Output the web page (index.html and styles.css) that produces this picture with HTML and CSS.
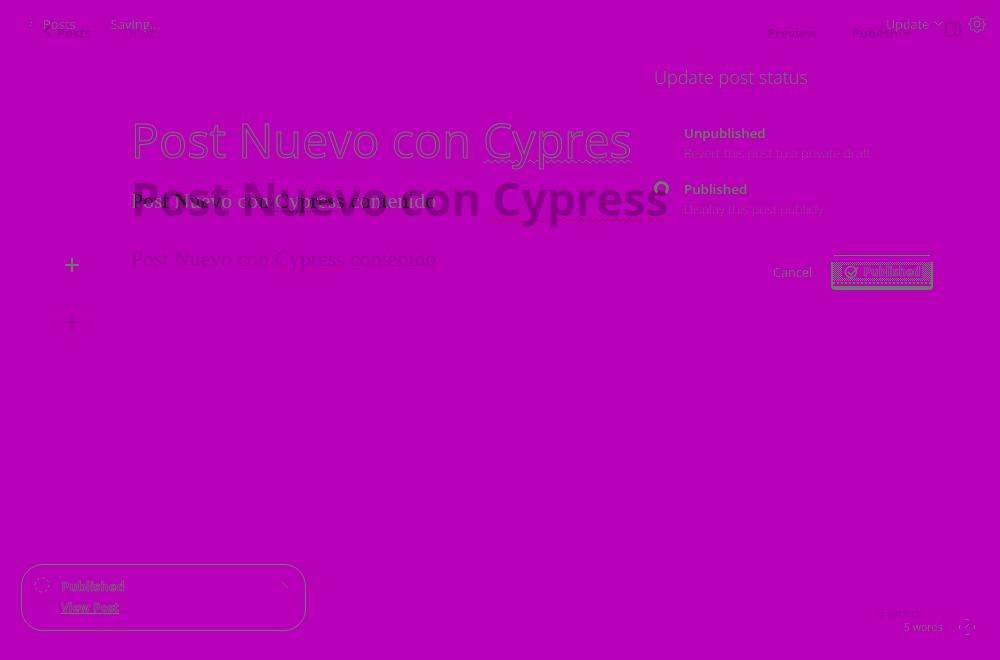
FILE: index.html
```html
<!DOCTYPE html>
<html lang="en">
<head>
<meta charset="utf-8">
<title>Post editor</title>
<link rel="stylesheet" href="styles.css">
</head>
<body>
<div class="stage">
  <section class="edge">
    <header class="e-head">
      <svg class="e-back" width="6" height="8" viewBox="0 0 6 8"><path d="M3 2h1v1H3zM2 5h1v1H2z" fill="#697d69"/></svg>
      <span class="e-posts dash">Posts</span>
      <span class="e-saving dash">Saving...</span>
      <span class="g-spacer"></span>
      <span class="e-update dash">Update</span>
      <svg class="e-chev" width="9" height="6" viewBox="0 0 9 6"><path d="M.5.5l4 4 4-4" fill="none" stroke="#697d69"/></svg>
      <svg class="e-gear" width="18" height="18" viewBox="0 0 18 18"><path d="M7.4 1h3.2l.5 2.2 1.5.7 2-1.1 2.2 2.2-1.1 2 .7 1.5 2.1.5v1l-2.1.5-.7 1.5 1.1 2-2.2 2.2-2-1.1-1.5.7-.5 2.2H7.4l-.5-2.2-1.5-.7-2 1.1-2.2-2.2 1.1-2-.7-1.5L-.5 9.5v-1l2.1-.5.7-1.5-1.1-2 2.2-2.2 2 1.1 1.5-.7z" transform="translate(.9 .9) scale(.9)" fill="none" stroke="#697d69"/><circle cx="9" cy="9" r="3" fill="none" stroke="#697d69"/></svg>
    </header>
    <div class="e-body">
      <div class="e-gutter">
        <svg width="16" height="16" viewBox="0 0 16 16"><path d="M8 1v14M1 8h14" stroke="#697d69" stroke-width="2"/></svg>
      </div>
      <div class="e-doc">
        <h1 class="e-title">Post Nuevo con <span class="e-squig">Cypres</span></h1>
        <p class="e-para">Post Nuevo con <span class="e-dots">Cypress</span> contenido</p>
      </div>
      <aside class="e-menu">
        <h2 class="e-menu-title">Update post status</h2>
        <div class="e-option">
          <span class="e-radio"></span>
          <div>
            <strong class="e-opt-name">Unpublished</strong>
            <p class="e-opt-sub">Revert this post to a private draft.</p>
          </div>
        </div>
        <div class="e-option">
          <span class="e-radio e-radio-on"></span>
          <div>
            <strong class="e-opt-name">Published</strong>
            <p class="e-opt-sub">Display this post publicly.</p>
          </div>
        </div>
        <div class="e-actions">
          <span class="e-cancel dash">Cancel</span>
          <div class="e-btn">
            <span class="e-btn-line"></span>
            <div class="e-btn-face">
              <span class="e-btn-label">
                <svg width="16" height="14" viewBox="0 0 16 14"><circle cx="7" cy="7" r="5.5" fill="none" stroke="#697d69" stroke-width="1.4"/><path d="M4 7l3 3 7-8" fill="none" stroke="#697d69" stroke-width="1.6"/></svg>
                <b>Published</b>
              </span>
            </div>
            <div class="e-btn-base"></div>
          </div>
        </div>
      </aside>
    </div>
    <div class="e-bottom">
      <div class="e-toast">
        <svg class="e-toast-icon" width="16" height="16" viewBox="0 0 16 16"><circle cx="8" cy="8" r="7" fill="none" stroke="#697d69" stroke-dasharray="2.5 3"/></svg>
        <div class="e-toast-text">
          <b>Published</b>
          <a>View Post</a>
        </div>
        <svg class="e-toast-x" width="8" height="8" viewBox="0 0 8 8"><path d="M.5.5l7 7" stroke="#697d69" stroke-dasharray="1.5 1"/></svg>
      </div>
      <div class="e-count">
        <span class="dash">5 words</span>
        <svg width="16" height="16" viewBox="0 0 16 16"><circle cx="8" cy="8" r="7.5" fill="none" stroke="#697d69" stroke-dasharray="4 7.7" stroke-dashoffset="2"/><path d="M6 9l4-4" stroke="#697d69"/></svg>
      </div>
    </div>
  </section>

  <section class="ghost">
    <header class="g-head">
      <span class="g-back"><svg width="9" height="14" viewBox="0 0 9 14"><path d="M7.5 2 2 7l5.5 5" fill="none" stroke="#8f0090" stroke-width="2"/></svg></span>
      <span class="g-posts">Posts</span>
      <span class="g-draft">Draft</span>
      <span class="g-spacer"></span>
      <span class="g-action g-preview">Preview</span>
      <span class="g-action g-publish">Publish</span>
      <svg class="g-chev" width="8" height="5" viewBox="0 0 8 5"><path d="M.5.5 4 4 7.5.5" fill="none" stroke="#8f0090" stroke-width="1.3"/></svg>
      <svg class="g-panel" width="16" height="15" viewBox="0 0 16 15"><rect x="1" y="1" width="14" height="13" rx="1.5" fill="none" stroke="#8f0090" stroke-width="1.5"/><path d="M10 1v13" stroke="#8f0090" stroke-width="1.5"/></svg>
    </header>
    <main class="g-main">
      <div class="g-gutter">
        <span class="g-plus"><svg width="18" height="18" viewBox="0 0 18 18"><path d="M9 1v16M1 9h16" stroke="#9c009c" stroke-width="2"/></svg></span>
      </div>
      <div class="g-doc">
        <h1 class="g-title">Post Nuevo con <span class="g-squig">Cypress</span></h1>
        <p class="g-para">Post Nuevo con <span class="g-squig2">Cypress</span> contenido</p>
      </div>
    </main>
    <footer class="g-foot">
      <span>5 words</span>
      <span class="g-help">?</span>
    </footer>
  </section>
</div>
</body>
</html>
```

FILE: styles.css
```css
html, body {
  margin: 0;
  padding: 0;
  background: #b800b8;
}

.stage {
  position: relative;
  width: 1000px;
  height: 660px;
  overflow: hidden;
  background: #b800b8;
  isolation: isolate;
  font-family: "Open Sans", "Noto Sans", sans-serif;
}

.ghost, .edge {
  position: absolute;
  inset: 0;
  display: flex;
  flex-direction: column;
}

.g-spacer { flex: 1; }

/* small text whose strokes break up into dashes */
.dash {
  color: transparent;
  background: repeating-linear-gradient(90deg, #697d69 0 2px, rgba(105, 125, 105, .35) 2px 3px);
  -webkit-background-clip: text;
  background-clip: text;
}

/* ghost layer */
.g-head {
  display: flex;
  align-items: center;
  height: 20px;
  padding: 23px 39px 0 43px;
  color: #8f0090;
  font-size: 13px;
  font-weight: 600;
}
.g-posts { margin-left: 5px; color: #8f0090; }
.g-draft { margin-left: 33px; color: #a000a2; font-weight: 400; }
.g-preview { margin-right: 35px; }
.g-chev { margin-left: 5px; margin-right: 34px; }
.g-panel { margin-top: -8px; }

.g-main {
  display: flex;
  flex: 1;
  min-height: 0;
}
.g-gutter {
  width: 131px;
  flex: none;
  padding-top: 261px;
}
.g-plus {
  display: flex;
  align-items: center;
  justify-content: center;
  width: 34px;
  height: 34px;
  margin-left: 54px;
  border: 1px solid #a800aa;
  border-radius: 50%;
}
.g-title {
  margin: 125px 0 0;
  font-size: 46px;
  letter-spacing: -.44px;
  line-height: 60px;
  font-weight: 700;
  color: rgb(156, 156, 156);
  mix-blend-mode: color-burn;
  white-space: nowrap;
}
.g-squig {
  text-decoration: underline wavy #c8006a 1px;
  text-underline-offset: 2px;
}
.g-para {
  margin: 15px 0 0;
  font-family: "Liberation Serif", serif;
  font-size: 21.8px;
  line-height: 32px;
  color: #9a009c;
  white-space: nowrap;
}
.g-squig2 {
  text-decoration: underline wavy #e0006c 1.2px;
  text-underline-offset: 1px;
}
.g-foot {
  display: flex;
  align-items: center;
  justify-content: flex-end;
  gap: 17px;
  padding: 0 43px 38px 0;
  font-size: 13px;
  color: #a000a4;
}
.g-help {
  box-sizing: border-box;
  width: 15px;
  height: 15px;
  border: 1.5px solid #a800aa;
  border-radius: 50%;
  text-align: center;
  line-height: 12px;
  font-size: 10px;
}

/* edge layer */
.edge { color: #697d69; }
.e-head {
  display: flex;
  align-items: center;
  height: 18px;
  padding: 15px 14px 0 28px;
  font-size: 13px;
  color: #697d69;
}
.e-posts { margin-left: 9px; }
.e-saving { margin-left: 35px; }
.e-update { font-size: 12.5px; }
.e-chev { margin-left: 5px; margin-right: 25px; }
.e-body {
  display: flex;
  flex: 1;
  min-height: 0;
  position: relative;
}
.e-gutter {
  width: 131px;
  padding: 223px 0 0 64px;
  box-sizing: border-box;
  flex: none;
}
.e-doc { width: 523px; flex: none; }
.e-title {
  margin: 75px 0 0;
  font-size: 46.7px;
  line-height: 64px;
  font-weight: 400;
  color: transparent;
  -webkit-text-stroke: 1px #697d69;
  white-space: nowrap;
}
.e-squig {
  text-decoration: underline wavy #697d69 1px;
  text-underline-offset: 1px;
}
.e-para {
  margin: 13px 0 0;
  font-family: "Liberation Serif", serif;
  font-size: 21.8px;
  line-height: 32px;
  white-space: nowrap;
  color: #697d69;
}
.e-dots {
  text-decoration: underline dotted #222 1px;
  text-underline-offset: 3px;
}
.e-menu {
  display: flex;
  flex-direction: column;
  padding-top: 32px;
  width: 280px;
}
.e-menu-title {
  margin: 0 0 35px;
  font-size: 18px;
  line-height: 24px;
  font-weight: 300;
}
.e-option {
  display: flex;
  gap: 15px;
  margin-bottom: 20px;
  height: 36px;
}
.e-radio {
  box-sizing: border-box;
  width: 15px;
  height: 15px;
  flex: none;
  margin-top: 1px;
  border-radius: 50%;
  visibility: hidden;
}
.e-radio-on {
  position: relative;
  z-index: 2;
  visibility: visible;
  border: 3px solid #697d69;
  border-bottom-color: transparent;
}
.e-opt-name {
  display: block;
  font-size: 13.3px;
  line-height: 18px;
  font-weight: 600;
}
.e-opt-sub {
  margin: 2px 0 0;
  font-size: 12.7px;
  line-height: 18px;
  font-weight: 300;
  white-space: nowrap;
  color: transparent;
  background: repeating-linear-gradient(180deg, #697d69 0 1px, rgba(105, 125, 105, .3) 1px 3px);
  -webkit-background-clip: text;
  background-clip: text;
}
.e-actions {
  display: flex;
  align-items: center;
  justify-content: flex-end;
  gap: 19px;
  padding-right: 1px;
  margin-top: 19px;
}
.e-cancel { font-size: 12.6px; }
.e-btn {
  display: flex;
  flex-direction: column;
  width: 102px;
  height: 35px;
}
.e-btn-line {
  height: 1px;
  margin: 0 3px 6px;
  background: #697d69;
}
.e-btn-face {
  display: flex;
  align-items: center;
  justify-content: center;
  height: 19px;
  border: solid #697d69;
  border-width: 0 2px;
  background: repeating-conic-gradient(#697d69 0 25%, transparent 0 50%) 0 0 / 2px 2px;
}
.e-btn-label {
  display: flex;
  align-items: center;
  gap: 4px;
  height: 13px;
  padding: 0 2px;
  background: #b800b8;
  font-size: 11.5px;
  line-height: 13px;
}
.e-btn-label b {
  font-weight: 700;
  color: transparent;
  -webkit-text-stroke: .6px #697d69;
}
.e-btn-base {
  flex: 1;
  box-sizing: border-box;
  border: solid #697d69;
  border-width: 0 2px 4px;
  border-radius: 0 0 4px 4px;
  background: repeating-linear-gradient(90deg, #697d69 0 2px, transparent 2px 4px) 0 1px / 100% 2px no-repeat;
}
.e-bottom {
  display: flex;
  align-items: flex-end;
  justify-content: space-between;
  padding: 0 25px 24px 21px;
}
.e-toast {
  display: flex;
  gap: 11px;
  box-sizing: border-box;
  width: 285px;
  height: 67px;
  padding: 12px 14px 12px 12px;
  margin-bottom: 5px;
  border: 1px solid #697d69;
  border-radius: 22px;
}
.e-toast-icon { flex: none; }
.e-toast-text {
  display: flex;
  flex-direction: column;
  gap: 4px;
  flex: 1;
  font-size: 13px;
}
.e-toast-text b {
  color: transparent;
  -webkit-text-stroke: .6px #697d69;
}
.e-toast-text a {
  width: fit-content;
  font-size: 12px;
  font-weight: 700;
  text-decoration: underline;
  color: transparent;
  -webkit-text-stroke: .5px #697d69;
  text-decoration-color: #697d69;
}
.e-toast-x { margin-top: 4px; margin-right: 2px; }
.e-count {
  display: flex;
  align-items: center;
  gap: 16px;
  font-size: 10.5px;
  margin-bottom: 1px;
}
```
